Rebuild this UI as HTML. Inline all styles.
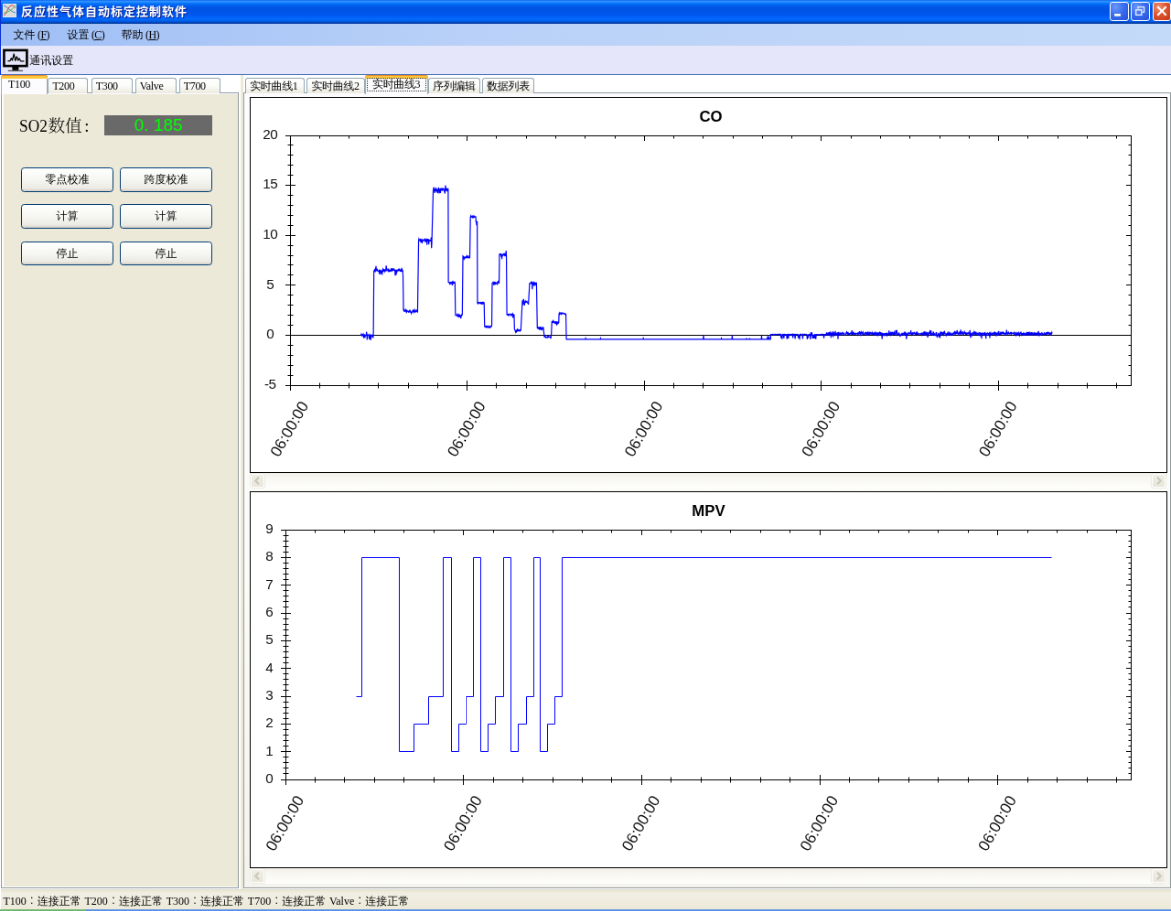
<!DOCTYPE html>
<html lang="zh-CN"><head><meta charset="utf-8"><title>反应性气体自动标定控制软件</title>
<style>
html,body{margin:0;padding:0;width:1171px;height:911px;overflow:hidden;background:#fff}
#root{position:absolute;left:0;top:0;width:1280px;height:996px;transform:scale(0.91484375);transform-origin:0 0;overflow:hidden;background:#fff;will-change:transform;
 font:12px/14px "Liberation Serif","WenQuanYi Zen Hei",serif;color:#000}
#root *{box-sizing:border-box}
.abs{position:absolute}
/* title bar */
#title{left:0;top:0;width:1280px;height:26px;background:linear-gradient(to bottom,#0058ee 0%,#3593ff 4%,#288eff 8%,#127dff 12%,#036ffc 16%,#0262ee 22%,#0057e5 30%,#0054e3 40%,#0055eb 58%,#005bf5 68%,#026afe 78%,#0062ef 86%,#0052d6 92%,#0040ab 96%,#003092 100%)}
#ttext{left:23px;top:5px;height:16px;line-height:16px;color:#fff;font:bold 13px/16px "Liberation Sans","Noto Sans CJK SC",sans-serif;letter-spacing:1px;text-shadow:1px 1px 0 #0a1883;white-space:nowrap}
.cb{top:2.1px;width:20.2px;height:20.8px;border:1px solid #fff;border-radius:3px;background:radial-gradient(circle at 30% 25%,#6c98f8 0%,#3a6cef 45%,#2450d6 100%)}
.cb.x{background:radial-gradient(circle at 30% 25%,#ee9377 0%,#dd5430 45%,#c33612 100%)}
/* menu */
#menu{left:0;top:26px;width:1280px;height:24px;background:linear-gradient(to right,#9ebef5 0%,#b9d1f8 40%,#c4daf9 100%)}
.mi{top:5px;height:14px;white-space:nowrap}
.mi i{font-style:normal;font-size:12px;letter-spacing:-.6px;margin-left:2.5px}
.mi u{text-decoration:underline}
/* toolbar */
#tool{left:0;top:50px;width:1280px;height:32px;background:#e6e6fa;border-bottom:1.1px solid #4a6fb8}
/* tabs */
.body{border:1px solid #919b9c;background:#fcfcfe}
.tab{top:84.6px;height:17.4px;border:1px solid #91a7b4;border-bottom:none;border-radius:3px 3px 0 0;background:linear-gradient(to bottom,#fff 0%,#fbfbf8 50%,#eceadf 100%);text-align:left;padding-left:4px;line-height:17px;white-space:nowrap;letter-spacing:-.35px}
.tab.sel{top:82px;height:21px;background:#fcfcfe;border-color:#a3b0b8;border-top:none;line-height:20px;padding-left:7px}
.tab.sel:before{content:"";position:absolute;left:-1px;right:-1px;top:0;height:3px;background:#ffc73c;border-top:1px solid #e68b2c;border-radius:3px 3px 0 0}
.btn{width:100.4px;height:26.5px;border:1px solid #003c74;border-radius:3.5px;background:linear-gradient(to bottom,#fff 0%,#f6f6f2 50%,#ecebe5 86%,#d6d0c5 100%);text-align:center;line-height:25px}
.panel{border:1.1px solid #000;background:#fff}
.sb{height:17px;background:linear-gradient(to bottom,#f1efe8 0%,#f8f7f2 35%,#fefefb 100%)}
.sbb{top:1px;width:15px;height:15px;border:1px solid #fff;border-radius:2.5px;background:linear-gradient(to bottom,#f0efe7,#e8e6da);box-shadow:0 0 0 1px #ebe9df}
#status{left:0;top:972px;width:1280px;height:22px;background:linear-gradient(to bottom,#ddd9c6 0,#ece9d8 2px,#f1efe4 5px,#ece9d8 100%)}
svg text.ax{font:15.3px "Liberation Sans",sans-serif;fill:#111;letter-spacing:-.6px}
svg text.xl{font:17.0px "Liberation Sans",sans-serif;fill:#111}
svg text.tt{font:bold 16.8px "Liberation Sans",sans-serif;fill:#000}
#status b{font-weight:normal;display:inline-block;width:12px;text-align:center;font-family:"Noto Serif CJK JP","Noto Sans CJK JP",serif}
</style></head><body>
<div id="root">
 <!-- window chrome -->
 <div id="title" class="abs">
  <svg class="abs" style="left:3.2px;top:4.2px" width="15" height="15" viewBox="0 0 15 15"><rect x="0" y="0" width="15" height="15" fill="#dcdcdc" stroke="#f4f4f4" stroke-width="1"/><path d="M1 13C4 12 6 3 9 2S13 4 14 5" stroke="#e0413a" fill="none" stroke-width="1"/><path d="M1 2C5 3 8 9 14 10" stroke="#3d8fd0" fill="none" stroke-width="1"/><path d="M1 10C5 10 9 8 14 2" stroke="#55b255" fill="none" stroke-width="1"/></svg>
  <div id="ttext" class="abs">反应性气体自动标定控制软件</div>
  <div class="cb abs" style="left:1213.4px"><svg width="18" height="18" viewBox="0 0 18 18" class="abs" style="left:0;top:0"><rect x="4.1" y="12" width="6.8" height="2.7" fill="#fff"/></svg></div>
  <div class="cb abs" style="left:1236.4px"><svg width="18" height="18" viewBox="0 0 18 18" class="abs" style="left:0;top:0"><path d="M7 6.6V4.6H13.6V10.4H11.4" fill="none" stroke="#fff" stroke-opacity=".85" stroke-width="1.3"/><rect x="4.7" y="7.8" width="6.2" height="5.6" fill="none" stroke="#fff" stroke-opacity=".9" stroke-width="1.3"/></svg></div>
  <div class="cb x abs" style="left:1259.5px"><svg width="18" height="18" viewBox="0 0 18 18" class="abs" style="left:0;top:0"><path d="M4.3 4.3L13.7 13.7M13.7 4.3L4.3 13.7" stroke="#fff" stroke-width="2.1"/></svg></div>
 </div>
 <div id="menu" class="abs">
  <div class="mi abs" style="left:14.6px">文件<i>(<u>F</u>)</i></div>
  <div class="mi abs" style="left:73.4px">设置<i>(<u>C</u>)</i></div>
  <div class="mi abs" style="left:132.6px">帮助<i>(<u>H</u>)</i></div>
 </div>
 <div id="tool" class="abs">
  <svg class="abs" style="left:3px;top:3px" width="28" height="26" viewBox="0 0 28 26"><rect x="1.4" y="1.9" width="25" height="17.2" fill="none" stroke="#000" stroke-width="2.6"/><rect x="10.4" y="20" width="7" height="3.9" fill="#000"/><rect x="5.8" y="23.7" width="16.2" height="1.3" fill="#555"/><path d="M5.4 13.6H8L9.4 10.6L10.5 13L12.2 5.8L13.8 13.4L15.3 8.8L16.8 13L18 10.8L19.6 13.8H23.4" fill="none" stroke="#000" stroke-width="1.25" stroke-linejoin="round"/></svg>
  <div class="abs" style="left:32.3px;top:8.6px;height:14px;white-space:nowrap">通讯设置</div>
 </div>

 <!-- left tab control -->
 <div class="body abs" style="left:1px;top:101.4px;width:260.2px;height:869.8px"></div>
 <div class="abs" style="left:4.4px;top:102.8px;width:255.3px;height:866.6px;background:#ece9d8"></div>
 <div class="tab abs" style="left:52.4px;width:44px">T200</div>
 <div class="tab abs" style="left:99.8px;width:44.8px">T300</div>
 <div class="tab abs" style="left:147.8px;width:44.8px">Valve</div>
 <div class="tab abs" style="left:195.8px;width:44.8px">T700</div>
 <div class="tab sel abs" style="left:1px;width:51.2px">T100</div>
 <div class="abs" style="left:21.4px;top:127px;font:300 18.67px/22px 'Liberation Serif','Noto Serif CJK SC',serif;white-space:nowrap"><span style="display:inline-block;width:31px;transform:scaleX(.93);transform-origin:0 50%">SO2</span>数值<span style="margin-left:2.6px">:</span></div>
 <div class="abs" style="left:114px;top:125.7px;width:118.3px;height:22.2px;background:#696969;color:#00ff00;font:19px/22.6px 'Liberation Sans',sans-serif;text-align:center;white-space:nowrap">0.<span style="display:inline-block;width:5.3px"></span>185</div>
 <div class="btn abs" style="left:23.2px;top:183.3px">零点校准</div>
 <div class="btn abs" style="left:131.2px;top:183.3px">跨度校准</div>
 <div class="btn abs" style="left:23.2px;top:223.4px">计算</div>
 <div class="btn abs" style="left:131.2px;top:223.4px">计算</div>
 <div class="btn abs" style="left:23.2px;top:263.6px">停止</div>
 <div class="btn abs" style="left:131.2px;top:263.6px">停止</div>

 <!-- splitter -->
 <div class="abs" style="left:263.2px;top:82px;width:2.6px;height:890px;background:#ece9d8"></div>

 <!-- right tab control -->
 <div class="body abs" style="left:265.9px;top:101.4px;width:1013.8px;height:869.8px;background:linear-gradient(to bottom,#fcfcfe 0%,#fbfbf8 60%,#f4f3ee 100%)"></div>
 <div class="tab abs" style="left:268.2px;width:64.6px">实时曲线1</div>
 <div class="tab abs" style="left:335.4px;width:63.6px">实时曲线2</div>
 <div class="tab abs" style="left:468px;width:56.8px">序列编辑</div>
 <div class="tab abs" style="left:527.2px;width:56.8px">数据列表</div>
 <div class="tab sel abs" style="left:399px;width:69px">实时曲线3<span class="abs" style="left:1.4px;top:3.4px;right:1.4px;bottom:2.6px;border:1px dotted #333"></span></div>

 <div class="sb abs" style="left:273px;top:517px;width:1003px"><div class="sbb abs" style="left:1px"><svg width="13" height="13" viewBox="0 0 13 13" class="abs" style="left:0;top:0"><path d="M8 2.8L4.2 6.5L8 10.2" fill="none" stroke="#c9c7ba" stroke-width="2"/></svg></div><div class="sbb abs" style="right:2px"><svg width="13" height="13" viewBox="0 0 13 13" class="abs" style="left:0;top:0"><path d="M5 2.8L8.8 6.5L5 10.2" fill="none" stroke="#c9c7ba" stroke-width="2"/></svg></div></div>
 <div class="sb abs" style="left:273px;top:949px;width:1003px"><div class="sbb abs" style="left:1px"><svg width="13" height="13" viewBox="0 0 13 13" class="abs" style="left:0;top:0"><path d="M8 2.8L4.2 6.5L8 10.2" fill="none" stroke="#c9c7ba" stroke-width="2"/></svg></div><div class="sbb abs" style="right:2px"><svg width="13" height="13" viewBox="0 0 13 13" class="abs" style="left:0;top:0"><path d="M5 2.8L8.8 6.5L5 10.2" fill="none" stroke="#c9c7ba" stroke-width="2"/></svg></div></div>

 <svg class="abs" style="left:0;top:0" width="1280" height="996" viewBox="0 0 1280 996">
<rect x="273.5" y="106.5" width="1002" height="410" fill="#fff" stroke="#000" stroke-width="1"/>
<rect x="273.5" y="537.5" width="1002" height="411" fill="#fff" stroke="#000" stroke-width="1"/>
<path d="M317.5 148V427M1236.5 148V422M349.5 418.5V424.5M349.5 148.5V151.5M381.5 418.5V424.5M381.5 148.5V151.5M413.5 418.5V424.5M413.5 148.5V151.5M446.5 418.5V424.5M446.5 148.5V151.5M478.5 418.5V424.5M478.5 148.5V151.5M510.5 416V427M510.5 148.5V154M542.5 418.5V424.5M542.5 148.5V151.5M575.5 418.5V424.5M575.5 148.5V151.5M607.5 418.5V424.5M607.5 148.5V151.5M639.5 418.5V424.5M639.5 148.5V151.5M672.5 418.5V424.5M672.5 148.5V151.5M704.5 416V427M704.5 148.5V154M736.5 418.5V424.5M736.5 148.5V151.5M768.5 418.5V424.5M768.5 148.5V151.5M801.5 418.5V424.5M801.5 148.5V151.5M833.5 418.5V424.5M833.5 148.5V151.5M865.5 418.5V424.5M865.5 148.5V151.5M897.5 416V427M897.5 148.5V154M930.5 418.5V424.5M930.5 148.5V151.5M962.5 418.5V424.5M962.5 148.5V151.5M994.5 418.5V424.5M994.5 148.5V151.5M1027.5 418.5V424.5M1027.5 148.5V151.5M1059.5 418.5V424.5M1059.5 148.5V151.5M1091.5 416V427M1091.5 148.5V154M1123.5 418.5V424.5M1123.5 148.5V151.5M1156.5 418.5V424.5M1156.5 148.5V151.5M1188.5 418.5V424.5M1188.5 148.5V151.5M1220.5 418.5V424.5M1220.5 148.5V151.5M312 148.5H1237M312 421.5H1237M314.5 410.5H320.5M1233.5 410.5H1236.5M314.5 399.5H320.5M1233.5 399.5H1236.5M314.5 388.5H320.5M1233.5 388.5H1236.5M314.5 377.5H320.5M1233.5 377.5H1236.5M312 366.5H323M1231 366.5H1236.5M314.5 355.5H320.5M1233.5 355.5H1236.5M314.5 344.5H320.5M1233.5 344.5H1236.5M314.5 333.5H320.5M1233.5 333.5H1236.5M314.5 322.5H320.5M1233.5 322.5H1236.5M312 311.5H323M1231 311.5H1236.5M314.5 300.5H320.5M1233.5 300.5H1236.5M314.5 289.5H320.5M1233.5 289.5H1236.5M314.5 279.5H320.5M1233.5 279.5H1236.5M314.5 268.5H320.5M1233.5 268.5H1236.5M312 257.5H323M1231 257.5H1236.5M314.5 246.5H320.5M1233.5 246.5H1236.5M314.5 235.5H320.5M1233.5 235.5H1236.5M314.5 224.5H320.5M1233.5 224.5H1236.5M314.5 213.5H320.5M1233.5 213.5H1236.5M312 202.5H323M1231 202.5H1236.5M314.5 191.5H320.5M1233.5 191.5H1236.5M314.5 180.5H320.5M1233.5 180.5H1236.5M314.5 169.5H320.5M1233.5 169.5H1236.5M314.5 158.5H320.5M1233.5 158.5H1236.5" stroke="#000" stroke-width="1" fill="none"/>
<path d="M317.5 366.5H1236.5" stroke="#000" stroke-width="1" fill="none"/>
<text x="295.2" y="424.9" text-anchor="middle" class="ax">-5</text>
<text x="295.2" y="370.3" text-anchor="middle" class="ax">0</text>
<text x="295.2" y="315.7" text-anchor="middle" class="ax">5</text>
<text x="295.2" y="261.1" text-anchor="middle" class="ax">10</text>
<text x="295.2" y="206.5" text-anchor="middle" class="ax">15</text>
<text x="295.2" y="151.9" text-anchor="middle" class="ax">20</text>
<text transform="translate(315.86 468.72) rotate(-60)" text-anchor="middle" class="xl" y="6.12">06:00:00</text>
<text transform="translate(509.5 468.72) rotate(-60)" text-anchor="middle" class="xl" y="6.12">06:00:00</text>
<text transform="translate(703.14 468.72) rotate(-60)" text-anchor="middle" class="xl" y="6.12">06:00:00</text>
<text transform="translate(896.79 468.72) rotate(-60)" text-anchor="middle" class="xl" y="6.12">06:00:00</text>
<text transform="translate(1090.43 468.72) rotate(-60)" text-anchor="middle" class="xl" y="6.12">06:00:00</text>
<text x="777" y="133.25" text-anchor="middle" class="tt">CO</text>
<path d="M394.38 365.44 394.71 366.7 395.04 365.36 395.37 366.35 395.7 367.72 396.02 365.39 396.35 367.26 396.68 365.7 397.01 365.18 397.34 366.77 397.66 369.72 397.99 366.16 398.32 365.92 398.65 367.33 398.98 369.18 399.3 366.47 399.63 366.7 399.96 366.27 400.29 366.21 400.61 362.71 400.94 364.91 401.27 371.52 401.6 367.12 401.93 366.65 402.25 365.93 402.58 366.19 402.91 366.35 403.24 366.53 403.57 370.79 403.89 367.32 404.22 365.61 404.55 366.09 404.88 371.12 405.21 371.2 405.53 366.9 405.86 366.46 406.19 366.2 406.52 366.29 406.85 367.47 407.17 366.47 407.5 366.88 407.83 369.37 408.16 364.51 408.7 296.32 409.03 296 409.36 295.09 409.69 295.89 410.02 294.86 410.34 296.2 410.67 295.32 411 290.78 411.33 294.92 411.65 295.5 411.98 294.55 412.31 294.33 412.64 295.64 412.97 296.39 413.29 296.4 413.62 296.2 413.95 295.89 414.28 296.52 414.61 299.57 414.93 295.08 415.26 295.33 415.59 297.05 415.92 295.39 416.25 300.17 416.57 295.78 416.9 297.01 417.23 295.76 417.56 298.44 417.89 299.13 418.21 295.44 418.54 293.98 418.87 294.64 419.2 296.82 419.53 294 419.85 296.47 420.18 294.86 420.51 294.86 420.84 296.85 421.16 296.27 421.49 295.43 421.82 294.57 422.15 290.34 422.48 293.08 422.8 295.19 423.13 294.43 423.46 295.56 423.79 295.72 424.12 295.75 424.44 296.17 424.77 293.56 425.1 296.34 425.43 295.91 425.76 296.6 426.08 296.3 426.41 294.88 426.74 296.35 427.07 296.47 427.4 294.97 427.72 293.14 428.05 294.79 428.38 295.82 428.71 294.73 429.04 294.72 429.36 293.36 429.69 295.44 430.02 295.21 430.35 294.82 430.67 294.22 431 295 431.33 295.67 431.66 294.77 431.99 301.17 432.31 295.52 432.64 295.93 432.97 300.66 433.3 296.28 433.63 295.73 433.95 296.71 434.28 295.17 434.61 296.49 434.94 294.28 435.27 296.36 435.59 294.94 435.92 295.66 436.25 295.49 436.58 293.68 436.91 295.54 437.23 296.03 437.56 295.52 437.89 296.04 438.22 295.33 438.54 296.32 438.87 296.03 439.2 292.75 439.53 297.19 439.86 294.85 440.18 295.96 440.51 300.69 441.06 339.6 441.39 337.22 441.71 340.72 442.04 339.83 442.37 339.47 442.7 339.71 443.03 339.04 443.35 340.62 443.68 339.36 444.01 340.63 444.34 339.86 444.67 340.84 444.99 339.45 445.32 339.61 445.65 340.01 445.98 340.22 446.31 340.21 446.63 341.72 446.96 340.61 447.29 340.4 447.62 340.39 447.95 338.6 448.27 340.58 448.6 340.19 448.93 341.01 449.26 341.66 449.58 342.5 449.91 340.51 450.24 342.12 450.57 340.76 450.9 340.21 451.22 339.32 451.55 340.17 451.88 339.35 452.21 339.36 452.54 341.18 452.86 340.32 453.19 338.77 453.52 339.83 453.85 340.36 454.18 341.05 454.5 341.04 454.83 339.65 455.16 338.96 455.49 339.25 455.82 340.28 456.14 340.47 456.47 340.78 457.56 263 457.89 261.29 458.22 262.21 458.55 262.67 458.88 262.2 459.2 262.9 459.53 261.84 459.86 260.87 460.19 265.1 460.52 262.37 460.84 262.58 461.17 263.36 461.5 265.96 461.83 262.05 462.16 262.44 462.48 262.89 462.81 262.74 463.14 262.21 463.47 263.02 463.8 263.1 464.12 262.7 464.45 261.26 464.78 261.11 465.11 263.95 465.43 263.38 465.76 263.57 466.09 262.15 466.42 261.79 466.75 267.65 467.07 261.07 467.4 263.56 467.73 262.71 468.06 261.13 468.39 263.25 468.71 267.15 469.04 262.78 469.37 262.4 469.7 262.38 470.03 263.12 470.35 263.45 470.68 263.03 471.01 263.18 471.34 259.41 471.67 271.3 471.99 266.09 473.52 208.19 473.85 206.61 474.18 204.57 474.51 206.03 474.84 208.33 475.16 210.99 475.49 208.99 475.82 206.92 476.15 206.3 476.47 207.7 476.8 206.82 477.13 208.27 477.46 208.45 477.79 210.32 478.11 206.63 478.44 210.58 478.77 209.82 479.1 211.37 479.43 204.85 479.75 207.59 480.08 208.58 480.41 206.69 480.74 211.09 481.07 206.13 481.39 210.91 481.72 207.6 482.05 206.21 482.38 206.48 482.71 207.18 483.03 205.59 483.36 207.96 483.69 208 484.02 205.5 484.35 207.17 484.67 207.03 485 205.87 485.33 207.4 485.66 209.47 485.98 207.7 486.31 211.81 486.64 206.95 486.97 202.56 487.3 207.6 487.62 207.81 487.95 206.75 488.28 207.9 488.61 208.36 488.94 206.06 489.26 208.06 489.59 205.93 489.92 206.85 490.14 309.1 490.47 308.22 490.79 308.4 491.12 309.29 491.45 309.92 491.78 308.32 492.11 309.74 492.43 309.17 492.76 310.53 493.09 308.61 493.42 308.5 493.75 308.56 494.07 308.15 494.4 312.04 494.73 308 495.06 310.53 495.39 308.11 495.71 308.55 496.04 309.49 496.37 309.3 496.7 308.41 497.02 308.24 497.35 309.44 497.79 344.09 498.12 344.6 498.45 344.67 498.77 344.85 499.1 344.95 499.43 345.09 499.76 343.69 500.09 344.4 500.41 345.6 500.74 343.49 501.07 346.86 501.4 345.27 501.73 344.22 502.05 345.38 502.38 344.66 502.71 345.49 503.04 344.83 503.36 345.23 503.69 348.2 504.02 345.31 504.35 345.55 504.68 344 505 344.14 505.33 344.85 505.99 280.38 506.32 280.88 506.64 280.42 506.97 280.99 507.3 283.16 507.63 282.39 507.96 281.53 508.28 281.93 508.61 281.46 508.94 280.79 509.27 280.91 509.6 281.29 509.92 279.93 510.25 280.84 510.58 279.51 510.91 281.54 511.23 281.48 511.56 280.41 511.89 279.35 512.22 281.65 512.55 281.81 512.87 281.43 513.2 281.49 513.53 281.59 514.19 238.29 514.51 236.24 514.84 237.03 515.17 236.58 515.5 236.98 515.83 236.54 516.15 237.22 516.48 236.46 516.81 237.26 517.14 236.51 517.47 238.31 517.79 236.3 518.12 237.9 518.45 236.47 518.78 236.92 519.11 237.19 519.43 237.06 519.76 236.83 520.09 237.02 520.31 243.07 520.64 241.18 520.96 246.27 521.29 245.04 521.62 241.95 521.95 330.78 522.27 330.49 522.6 332.55 522.93 330.99 523.26 330.54 523.59 330.58 523.91 330.73 524.24 331.34 524.57 330.86 524.9 331.24 525.23 331.53 525.55 330.64 525.88 330.99 526.21 332.29 526.54 330.03 526.87 332.89 527.19 331.45 527.52 330.83 527.85 331.43 528.18 329.77 528.51 331.37 528.83 331.54 529.16 330.25 529.71 356.26 530.04 357.12 530.36 356.52 530.69 356.97 531.02 357.43 531.35 356.58 531.68 356.84 532 357.84 532.33 357.63 532.66 356.86 532.99 357.46 533.32 356.61 533.64 356.8 533.97 356.59 534.3 358.5 534.63 357.49 534.95 357.57 535.28 358.13 535.61 357.73 535.94 355.98 536.27 357.32 536.59 356.77 536.92 356.93 537.25 356.96 537.58 355.59 538.02 309.4 538.34 309.31 538.67 309.38 539 308.6 539.33 309.67 539.65 308.55 539.98 311.94 540.31 308.12 540.64 310.32 540.97 307.95 541.29 309.38 541.62 311.11 541.95 308.76 542.28 309.74 542.61 309.58 542.93 309.23 543.26 309.53 543.59 311.38 543.92 308.49 544.25 308.5 544.57 306.83 544.9 309.57 545.23 308.64 545.56 309.79 545.99 277.14 546.32 278.11 546.65 278.16 546.98 278.59 547.31 278.15 547.63 277.01 547.96 281.04 548.29 278.1 548.62 283.16 548.95 278.11 549.27 280.14 549.6 277.57 549.93 278.94 550.26 277.63 550.59 279.01 550.91 276.8 551.24 278.43 551.57 277.82 551.9 279.02 552.23 278.3 552.55 280.19 552.88 279.08 553.21 273.94 553.54 279.3 554.08 343.72 554.41 344.21 554.74 344.21 555.07 343.58 555.4 344.42 555.72 344.09 556.05 344.82 556.38 343.98 556.71 343.41 557.04 343.78 557.36 343.55 557.69 343.43 558.02 343.78 558.35 344.57 558.67 344.99 559 343.58 559.33 344.1 559.66 343.63 559.99 343.74 560.31 343.12 560.64 347.48 560.97 343.12 561.3 344.08 561.63 344.31 561.95 343.63 562.39 359.74 562.72 360.67 563.05 360.95 563.37 362.38 563.7 363.07 564.03 361.36 564.36 361.21 564.69 362.11 565.01 360.82 565.34 360.15 565.67 361.4 566 360.76 566.33 362.12 566.65 360.1 566.98 361.33 567.31 361.76 567.64 361.25 567.97 361 568.29 361.07 568.62 361.64 568.95 360.23 569.28 361.53 571.03 328.38 571.35 330.65 571.68 333.32 572.01 329.17 572.34 326.8 572.67 329.51 572.99 329.95 573.32 334.05 573.65 330.82 573.98 330.57 574.31 329.12 574.63 329.63 574.96 330.28 575.29 329.8 575.62 329.51 575.95 329.24 576.27 330.56 576.6 331.17 576.93 331.2 577.26 330.3 577.58 332.92 578.9 310.02 579.22 310.18 579.55 309.6 579.88 309.47 580.21 309.26 580.54 308.56 580.86 309.41 581.19 310.54 581.52 307.76 581.85 316.32 582.18 311.11 582.5 309.28 582.83 311.18 583.16 307.71 583.49 310.03 583.82 312.76 584.14 309.9 584.47 310.59 584.8 309.61 585.13 310.53 585.46 310.97 585.78 309.27 586.11 309.03 586.44 309.62 587.31 358.51 587.64 358.67 587.97 357.25 588.3 359.55 588.63 358.26 588.95 358.85 589.28 358.65 589.61 360.76 589.94 357.18 590.26 358.97 590.59 359.31 590.92 357.79 591.25 358.07 591.58 360.97 591.9 357.73 592.23 358.95 592.56 358.46 592.89 359.69 593.22 358.7 593.54 359.09 593.87 357.44 595.07 368.62 595.4 366.4 595.73 368.36 596.06 368.76 596.39 368.19 596.71 368.8 597.04 368.44 597.37 368.6 597.7 368.58 598.03 369.08 598.35 368.8 598.68 367.95 599.01 368.52 599.34 367.82 599.67 368.39 599.99 368.16 600.32 368.31 600.65 368.43 600.98 368.54 601.3 368.13 601.63 368.08 601.96 370.18 602.29 368.29 602.62 366.77 603.27 351.03 603.6 352.07 603.93 352.38 604.26 351.57 604.58 352.84 604.91 350.97 605.24 351.77 605.57 352.05 605.9 352.08 606.22 353.4 606.55 351.22 606.88 353.04 607.21 352.73 607.54 351.26 607.86 354.28 608.19 352.79 608.52 355.79 608.85 351.17 609.18 354.7 609.5 352.75 609.83 352.72 610.16 352.27 610.49 352.91 610.81 352.03 611.03 343.67 611.36 342.25 611.69 343.11 612.02 342.41 612.35 342.29 612.67 342.68 613 341.44 613.33 343.22 613.66 342.42 613.98 342.71 614.31 342.62 614.64 342.19 614.97 342.86 615.3 342.62 615.62 342.32 615.95 342.62 616.28 342.41 616.61 342.47 616.94 342.66 617.26 343.56 617.59 343.56 617.92 343.07 618.25 343.67 618.58 343.53 619.12 370.88 639.78 370.88 640.11 369.79 640.44 370.88 656.07 370.88 656.4 369.79 656.72 370.88 702.85 370.88 703.18 369.79 703.51 370.88 768.66 370.88 768.98 366.51 769.31 370.88 788.22 370.88 788.55 369.79 788.88 370.88 800.03 370.88 800.36 366.51 800.68 370.88 815.66 370.88 815.99 369.57 816.31 370.88 819.05 370.88 819.37 369.57 819.7 370.88 832.16 370.88 832.49 367.17 832.82 370.88 838.61 370.88 838.94 367.6 839.27 370.88 840.25 370.88 840.58 367.6 840.91 370.88 842.33 370.88 842.55 365.54 843.04 365.75 843.53 365.5 844.02 365.46 844.52 365.38 845.01 366.04 845.5 366.27 845.99 365.4 846.48 365.82 846.98 365.96 847.47 365.33 847.96 365.82 848.45 365.69 848.94 365.64 849.43 365.96 849.93 365.26 850.42 365.42 850.91 365.76 851.4 365.39 851.89 365.98 852.39 365.28 852.88 365.72 853.37 365.45 853.86 369.6 854.35 365.71 854.85 370.57 855.34 365.53 855.83 365.8 856.32 365.59 856.81 369.86 857.3 365.57 857.8 365.43 858.29 365.52 858.78 365.58 859.27 365.74 859.76 365.69 860.26 370.74 860.75 365.86 861.24 365.48 861.73 370.06 862.22 365.63 862.72 365.79 863.21 365.67 863.7 365.6 864.19 366.13 864.68 365.23 865.18 365.51 865.67 365.84 866.16 365.47 866.65 369.49 867.14 365.38 867.63 365.54 868.13 365.3 868.62 365.4 869.11 370.39 869.6 365.43 870.09 365.48 870.59 365.7 871.08 365.62 871.57 365.5 872.06 365.7 872.55 369.41 873.05 365.62 873.54 369.55 874.03 370.27 874.52 365.4 875.01 365.48 875.5 365.16 876 365.58 876.49 365.8 876.98 365.68 877.47 370.52 877.96 365.29 878.46 365.65 878.95 365.54 879.44 365.23 879.93 365.72 880.42 365.69 880.92 365.53 881.41 365.33 881.9 365.69 882.39 370.85 882.88 365.79 883.37 369.34 883.87 365.64 884.36 365.37 884.85 365.53 885.34 365.68 885.83 370.94 886.33 363.37 886.82 365.07 887.31 363.26 887.8 365.45 888.29 369.84 888.79 365.73 889.28 369.99 889.77 365.71 890.26 370.01 890.75 365.54 891.25 365.65 891.74 370.76 892.23 365.67 892.72 365.57 893.21 365.68 893.7 365.78 894.2 365.62 894.69 365.78 895.18 365.94 895.67 365.65 896.16 365.88 896.66 365.76 897.15 366.2 897.64 365.41 898.13 365.26 898.62 365.89 899.12 365.91 899.61 365.46 900.1 365.6 900.59 369.73 901.08 365.57 901.57 365.8 902.07 365.67 902.56 365.59 903.05 365.86 903.54 363.47 903.87 364.66 904.2 365.76 904.53 365.12 904.85 365.16 905.18 363.71 905.51 365.36 905.84 366.59 906.17 362.97 906.49 364.94 906.82 365.93 907.15 365.04 907.48 366.22 907.81 363.45 908.13 363.99 908.46 369.31 908.79 364.88 909.12 365.45 909.44 363.99 909.77 366.06 910.1 363.55 910.43 364.08 910.76 368.45 911.08 363.41 911.41 363.9 911.74 365.84 912.07 363.66 912.4 365.35 912.72 365.84 913.05 361.83 913.38 365.04 913.71 364.92 914.04 366.05 914.36 366.28 914.69 364.76 915.02 363.39 915.35 364.61 915.68 364.3 916 370.78 916.33 364.15 916.66 363.04 916.99 365.92 917.32 364.54 917.64 365.32 917.97 365.59 918.3 365.13 918.63 364.43 918.95 366.54 919.28 364.47 919.61 364.4 919.94 364.61 920.27 363.87 920.59 364.71 920.92 363.78 921.25 364.13 921.58 365 921.91 365.19 922.23 365.21 922.56 363.62 922.89 365.43 923.22 366.04 923.55 366.18 923.87 366.07 924.2 366.07 924.53 365.84 924.86 363.98 925.19 364.04 925.51 363.07 925.84 364.29 926.17 364.54 926.5 365.45 926.82 362.83 927.15 365.83 927.48 364.24 927.81 364.55 928.14 365.95 928.46 365.6 928.79 364.84 929.12 365.19 929.45 364.21 929.78 364.01 930.1 364.15 930.43 364.64 930.76 365.41 931.09 360.99 931.42 365.96 931.74 364.38 932.07 363.79 932.4 365.76 932.73 364.27 933.06 365.37 933.38 365.14 933.71 364.16 934.04 364.97 934.37 365.24 934.7 365.21 935.02 364.2 935.35 366.17 935.68 364.24 936.01 364.34 936.33 364.56 936.66 364.76 936.99 365.03 937.32 364.57 937.65 365.59 937.97 364.42 938.3 365.03 938.63 364.47 938.96 363.35 939.29 362.91 939.61 364.2 939.94 363.14 940.27 363.13 940.6 366.13 940.93 365.55 941.25 363.94 941.58 363.09 941.91 364.49 942.24 362.81 942.57 365.57 942.89 363.33 943.22 364.21 943.55 363.35 943.88 365.52 944.2 365.29 944.53 365.23 944.86 365.45 945.19 365.39 945.52 364.47 945.84 363.05 946.17 365.48 946.5 362.82 946.83 364.14 947.16 366.69 947.48 364.94 947.81 365.28 948.14 363.27 948.47 363.03 948.8 365.18 949.12 364.4 949.45 365.04 949.78 364.13 950.11 365.62 950.44 365.02 950.76 364.01 951.09 365.08 951.42 364.55 951.75 363.75 952.08 364.56 952.4 363.62 952.73 363.69 953.06 365.73 953.39 364.72 953.71 363.63 954.04 364.84 954.37 364.51 954.7 365.5 955.03 365.85 955.35 363.46 955.68 364.99 956.01 365.35 956.34 364.54 956.67 365.21 956.99 363.24 957.32 363.53 957.65 364.36 957.98 365.26 958.31 364.46 958.63 366.06 958.96 366.58 959.29 365.1 959.62 363.28 959.95 365.99 960.27 366.34 960.6 365.75 960.93 364.36 961.26 363.44 961.58 363.14 961.91 365.56 962.24 363.19 962.57 364.95 962.9 364.24 963.22 364.13 963.55 365.93 963.88 365.36 964.21 370.72 964.54 363.88 964.86 365.1 965.19 365.7 965.52 366.22 965.85 364.28 966.18 366.16 966.5 366.51 966.83 365.9 967.16 364.13 967.49 366.13 967.82 365.59 968.14 365.11 968.47 364.43 968.8 364.67 969.13 364.52 969.46 366.65 969.78 365.94 970.11 364.68 970.44 365.35 970.77 365.38 971.09 365.67 971.42 365.75 971.75 361.41 972.08 364.51 972.41 365.34 972.73 365.19 973.06 364.5 973.39 365.83 973.72 364.68 974.05 363.17 974.37 363.53 974.7 365.63 975.03 365.26 975.36 364.16 975.69 365.22 976.01 363.03 976.34 366.16 976.67 363.63 977 365.98 977.33 363.37 977.65 362.81 977.98 365.03 978.31 365.87 978.64 365.38 978.96 366.2 979.29 360.89 979.62 364.15 979.95 363.06 980.28 360.77 980.6 366.08 980.93 365.63 981.26 366.03 981.59 365.13 981.92 365.13 982.24 364.93 982.57 363.41 982.9 365.51 983.23 365.37 983.56 366.94 983.88 367.32 984.21 365.93 984.54 367.29 984.87 365.29 985.2 365.32 985.52 365.01 985.85 364.53 986.18 365.28 986.51 364.63 986.84 365.04 987.16 364.93 987.49 366.77 987.82 363.64 988.15 366 988.47 366.81 988.8 362.6 989.13 365.42 989.46 365.4 989.79 362.87 990.11 364.5 990.44 364.73 990.77 370.69 991.1 367.16 991.43 364.39 991.75 366.21 992.08 364.44 992.41 365.86 992.74 363.89 993.07 364.47 993.39 364.78 993.72 364.28 994.05 363.76 994.38 364.7 994.71 365.07 995.03 364.99 995.36 364.71 995.69 360.95 996.02 364.52 996.35 365.69 996.67 364.6 997 364.46 997.33 364.03 997.66 365.61 997.98 365.83 998.31 364.08 998.64 364.35 998.97 364.13 999.3 363.46 999.62 363.45 999.95 365.03 1000.28 365.59 1000.61 364.4 1000.94 364.48 1001.26 363.86 1001.59 365.95 1001.92 364.79 1002.25 365.23 1002.58 363.33 1002.9 363.77 1003.23 365.47 1003.56 365.62 1003.89 365.08 1004.22 364.91 1004.54 364.95 1004.87 364.7 1005.2 365.09 1005.53 365.42 1005.85 364.94 1006.18 364.54 1006.51 365.05 1006.84 365.29 1007.17 365.5 1007.49 366.1 1007.82 364.09 1008.15 364.3 1008.48 366.23 1008.81 364.65 1009.13 363.94 1009.46 365.63 1009.79 365.56 1010.12 365.7 1010.45 362.34 1010.77 363.8 1011.1 363.54 1011.43 366.65 1011.76 362.64 1012.09 364.52 1012.41 365.76 1012.74 364.89 1013.07 363.96 1013.4 364.75 1013.73 363.22 1014.05 369.03 1014.38 365.83 1014.71 365.42 1015.04 364.42 1015.36 365.67 1015.69 363.95 1016.02 364.38 1016.35 364.41 1016.68 360.81 1017 365.09 1017.33 365.5 1017.66 361.33 1017.99 363.99 1018.32 364.33 1018.64 365.32 1018.97 365.22 1019.3 366.09 1019.63 365.69 1019.96 363.92 1020.28 364.62 1020.61 363.8 1020.94 365.18 1021.27 364.18 1021.6 366.74 1021.92 365.26 1022.25 367.04 1022.58 365.73 1022.91 365.29 1023.23 363.46 1023.56 363.39 1023.89 366.07 1024.22 368.59 1024.55 366.03 1024.87 367.55 1025.2 366.55 1025.53 364.41 1025.86 364.55 1026.19 366.6 1026.51 367.39 1026.84 365.82 1027.17 364.72 1027.5 369.54 1027.83 363.19 1028.15 363.38 1028.48 364.93 1028.81 364 1029.14 365.46 1029.47 363.96 1029.79 364.8 1030.12 366.11 1030.45 364.69 1030.78 363.08 1031.11 364.81 1031.43 366.47 1031.76 366.09 1032.09 361.92 1032.42 364.51 1032.74 363.42 1033.07 364.86 1033.4 365.02 1033.73 365.17 1034.06 366.24 1034.38 364.82 1034.71 364.98 1035.04 366.2 1035.37 365.66 1035.7 363.92 1036.02 363.45 1036.35 366.72 1036.68 363.84 1037.01 364.95 1037.34 366.16 1037.66 364.07 1037.99 364.96 1038.32 365.95 1038.65 365.47 1038.98 363.22 1039.3 366.02 1039.63 365.62 1039.96 365.31 1040.29 366.42 1040.61 364.29 1040.94 365.45 1041.27 364.99 1041.6 366.38 1041.93 364.53 1042.25 363.97 1042.58 364.87 1042.91 364.89 1043.24 364.96 1043.57 361.77 1043.89 363.61 1044.22 365.65 1044.55 364.49 1044.88 363.56 1045.21 364.8 1045.53 364.55 1045.86 364.34 1046.19 360.85 1046.52 364.37 1046.85 364.89 1047.17 364.81 1047.5 364.29 1047.83 365.31 1048.16 363.66 1048.49 364.17 1048.81 363.25 1049.14 365.79 1049.47 362.07 1049.8 364.31 1050.12 360.39 1050.45 364.87 1050.78 364.33 1051.11 364.02 1051.44 364.17 1051.76 365.46 1052.09 362.09 1052.42 363.43 1052.75 364.52 1053.08 365.97 1053.4 364.03 1053.73 364.22 1054.06 365.27 1054.39 362.66 1054.72 363.29 1055.04 363.79 1055.37 363.73 1055.7 366.21 1056.03 364.4 1056.36 364.81 1056.68 365.77 1057.01 363.37 1057.34 364.98 1057.67 364.68 1057.99 364.85 1058.32 363.56 1058.65 365.05 1058.98 363.72 1059.31 364.47 1059.63 364.66 1059.96 366.47 1060.29 360.77 1060.62 367.12 1060.95 369.28 1061.27 364.21 1061.6 365.08 1061.93 366.05 1062.26 365.65 1062.59 366.3 1062.91 363.32 1063.24 364.61 1063.57 364 1063.9 364.65 1064.23 365.88 1064.55 365.42 1064.88 362.87 1065.21 363.6 1065.54 365.71 1065.87 363.78 1066.19 364.63 1066.52 363.79 1066.85 364.99 1067.18 364.02 1067.5 364.76 1067.83 365.24 1068.16 364.27 1068.49 364.2 1068.82 365.7 1069.14 364.52 1069.47 365.71 1069.8 366.34 1070.13 366.12 1070.46 364.77 1070.78 363.63 1071.11 363.67 1071.44 364.05 1071.77 366.32 1072.1 365.48 1072.42 366.15 1072.75 364.17 1073.08 370.18 1073.41 364.08 1073.74 364.15 1074.06 364.29 1074.39 365.74 1074.72 363.96 1075.05 365.46 1075.37 366.48 1075.7 363.83 1076.03 366.15 1076.36 363.63 1076.69 363.49 1077.01 366.63 1077.34 364.58 1077.67 370.09 1078 365.23 1078.33 364.05 1078.65 366.77 1078.98 364.12 1079.31 363.9 1079.64 364.07 1079.97 364.32 1080.29 364.74 1080.62 366.36 1080.95 364.5 1081.28 364.31 1081.61 363.89 1081.93 369.4 1082.26 364.31 1082.59 364.48 1082.92 363.86 1083.25 365.86 1083.57 366.16 1083.9 364.24 1084.23 366.28 1084.56 364.87 1084.88 363.63 1085.21 365.14 1085.54 365.29 1085.87 364.63 1086.2 363.83 1086.52 365.16 1086.85 365.45 1087.18 364.08 1087.51 363.1 1087.84 363.3 1088.16 365.77 1088.49 366.06 1088.82 366.63 1089.15 364.63 1089.48 365.25 1089.8 365.79 1090.13 364.37 1090.46 364.71 1090.79 363.91 1091.12 365.31 1091.44 365.65 1091.77 361.87 1092.1 365.76 1092.43 364.33 1092.75 364.55 1093.08 365.59 1093.41 365.42 1093.74 362.72 1094.07 364.3 1094.39 364.1 1094.72 365.24 1095.05 364.75 1095.38 363.32 1095.71 363.26 1096.03 364.27 1096.36 364.58 1096.69 363.45 1097.02 363.92 1097.35 365.4 1097.67 364.23 1098 364.6 1098.33 366.1 1098.66 366.28 1098.99 365.72 1099.31 364.14 1099.64 364.42 1099.97 364.59 1100.3 360.65 1100.63 363.35 1100.95 364.71 1101.28 363.72 1101.61 365.73 1101.94 364.2 1102.26 363.41 1102.59 364.52 1102.92 364.75 1103.25 364.97 1103.58 364.15 1103.9 364.38 1104.23 364.04 1104.56 364.46 1104.89 362.98 1105.22 366.07 1105.54 363.99 1105.87 363.48 1106.2 363.84 1106.53 364.11 1106.86 364.57 1107.18 364.16 1107.51 363.97 1107.84 364.41 1108.17 364.05 1108.5 366.04 1108.82 362.65 1109.15 364.29 1109.48 364.83 1109.81 365.28 1110.13 365.57 1110.46 366.25 1110.79 362.97 1111.12 364.01 1111.45 365.55 1111.77 365.98 1112.1 365.19 1112.43 364.52 1112.76 365.82 1113.09 365.47 1113.41 363.81 1113.74 364.63 1114.07 366.05 1114.4 366.91 1114.73 366.26 1115.05 363.92 1115.38 364.08 1115.71 363.82 1116.04 362.56 1116.37 365.22 1116.69 365.01 1117.02 367.26 1117.35 364.16 1117.68 365.37 1118.01 365.2 1118.33 364.38 1118.66 365.71 1118.99 365.39 1119.32 364.77 1119.64 366.37 1119.97 366.15 1120.3 365.29 1120.63 365.53 1120.96 364.7 1121.28 365.08 1121.61 365.93 1121.94 365.36 1122.27 362.86 1122.6 366.12 1122.92 365.31 1123.25 364.42 1123.58 363.2 1123.91 365.65 1124.24 365.39 1124.56 365.72 1124.89 362.68 1125.22 365.96 1125.55 364.91 1125.88 366.76 1126.2 364.63 1126.53 365.38 1126.86 364.09 1127.19 364.31 1127.51 366.42 1127.84 362.97 1128.17 364.01 1128.5 364.72 1128.83 365.44 1129.15 363.78 1129.48 364.98 1129.81 366.16 1130.14 363.51 1130.47 364.72 1130.79 365.25 1131.12 363.01 1131.45 367.03 1131.78 364.47 1132.11 364.76 1132.43 365.92 1132.76 364.54 1133.09 364.21 1133.42 365.74 1133.75 365.05 1134.07 365.82 1134.4 366.79 1134.73 363.86 1135.06 361.99 1135.39 363 1135.71 364.38 1136.04 366.23 1136.37 365.42 1136.7 366.48 1137.02 363.99 1137.35 365.1 1137.68 366.07 1138.01 365.84 1138.34 364.84 1138.66 364.03 1138.99 364.5 1139.32 364.24 1139.65 365.9 1139.98 365.73 1140.3 365.84 1140.63 365.44 1140.96 365.43 1141.29 364.08 1141.62 363.74 1141.94 364.49 1142.27 365.63 1142.6 365.77 1142.93 365.3 1143.26 364.56 1143.58 365.25 1143.91 365.35 1144.24 363.15 1144.57 365.53 1144.89 363.17 1145.22 364.7 1145.55 362.7 1145.88 365.19 1146.21 365.14 1146.53 363.78 1146.86 363.73 1147.19 363.71 1147.52 365.35 1147.85 364.99 1148.17 365.69 1148.5 364.8 1148.83 364.1 1149.16 364.49 1149.49 364.89 1149.81 363.43 1150.14 364.35" stroke="#0000ff" stroke-width="1.2" fill="none" stroke-linejoin="miter"/>
<path d="M312.5 579V858M1236.5 579V853M344.5 849.5V855.5M344.5 579.5V582.5M376.5 849.5V855.5M376.5 579.5V582.5M409.5 849.5V855.5M409.5 579.5V582.5M441.5 849.5V855.5M441.5 579.5V582.5M474.5 849.5V855.5M474.5 579.5V582.5M506.5 847V858M506.5 579.5V585M539.5 849.5V855.5M539.5 579.5V582.5M571.5 849.5V855.5M571.5 579.5V582.5M604.5 849.5V855.5M604.5 579.5V582.5M636.5 849.5V855.5M636.5 579.5V582.5M668.5 849.5V855.5M668.5 579.5V582.5M701.5 847V858M701.5 579.5V585M733.5 849.5V855.5M733.5 579.5V582.5M766.5 849.5V855.5M766.5 579.5V582.5M798.5 849.5V855.5M798.5 579.5V582.5M831.5 849.5V855.5M831.5 579.5V582.5M863.5 849.5V855.5M863.5 579.5V582.5M896.5 847V858M896.5 579.5V585M928.5 849.5V855.5M928.5 579.5V582.5M960.5 849.5V855.5M960.5 579.5V582.5M993.5 849.5V855.5M993.5 579.5V582.5M1025.5 849.5V855.5M1025.5 579.5V582.5M1058.5 849.5V855.5M1058.5 579.5V582.5M1090.5 847V858M1090.5 579.5V585M1123.5 849.5V855.5M1123.5 579.5V582.5M1155.5 849.5V855.5M1155.5 579.5V582.5M1188.5 849.5V855.5M1188.5 579.5V582.5M1220.5 849.5V855.5M1220.5 579.5V582.5M307 579.5H1237M307 852.5H1237M309.5 845.5H315.5M1233.5 845.5H1236.5M309.5 839.5H315.5M1233.5 839.5H1236.5M309.5 833.5H315.5M1233.5 833.5H1236.5M309.5 827.5H315.5M1233.5 827.5H1236.5M307 821.5H318M1231 821.5H1236.5M309.5 815.5H315.5M1233.5 815.5H1236.5M309.5 809.5H315.5M1233.5 809.5H1236.5M309.5 803.5H315.5M1233.5 803.5H1236.5M309.5 797.5H315.5M1233.5 797.5H1236.5M307 791.5H318M1231 791.5H1236.5M309.5 785.5H315.5M1233.5 785.5H1236.5M309.5 779.5H315.5M1233.5 779.5H1236.5M309.5 773.5H315.5M1233.5 773.5H1236.5M309.5 767.5H315.5M1233.5 767.5H1236.5M307 761.5H318M1231 761.5H1236.5M309.5 754.5H315.5M1233.5 754.5H1236.5M309.5 748.5H315.5M1233.5 748.5H1236.5M309.5 742.5H315.5M1233.5 742.5H1236.5M309.5 736.5H315.5M1233.5 736.5H1236.5M307 730.5H318M1231 730.5H1236.5M309.5 724.5H315.5M1233.5 724.5H1236.5M309.5 718.5H315.5M1233.5 718.5H1236.5M309.5 712.5H315.5M1233.5 712.5H1236.5M309.5 706.5H315.5M1233.5 706.5H1236.5M307 700.5H318M1231 700.5H1236.5M309.5 694.5H315.5M1233.5 694.5H1236.5M309.5 688.5H315.5M1233.5 688.5H1236.5M309.5 682.5H315.5M1233.5 682.5H1236.5M309.5 676.5H315.5M1233.5 676.5H1236.5M307 670.5H318M1231 670.5H1236.5M309.5 663.5H315.5M1233.5 663.5H1236.5M309.5 657.5H315.5M1233.5 657.5H1236.5M309.5 651.5H315.5M1233.5 651.5H1236.5M309.5 645.5H315.5M1233.5 645.5H1236.5M307 639.5H318M1231 639.5H1236.5M309.5 633.5H315.5M1233.5 633.5H1236.5M309.5 627.5H315.5M1233.5 627.5H1236.5M309.5 621.5H315.5M1233.5 621.5H1236.5M309.5 615.5H315.5M1233.5 615.5H1236.5M307 609.5H318M1231 609.5H1236.5M309.5 603.5H315.5M1233.5 603.5H1236.5M309.5 597.5H315.5M1233.5 597.5H1236.5M309.5 591.5H315.5M1233.5 591.5H1236.5M309.5 585.5H315.5M1233.5 585.5H1236.5" stroke="#000" stroke-width="1" fill="none"/>
<text x="294.25" y="855.9" text-anchor="middle" class="ax">0</text>
<text x="294.25" y="825.57" text-anchor="middle" class="ax">1</text>
<text x="294.25" y="795.23" text-anchor="middle" class="ax">2</text>
<text x="294.25" y="764.9" text-anchor="middle" class="ax">3</text>
<text x="294.25" y="734.57" text-anchor="middle" class="ax">4</text>
<text x="294.25" y="704.23" text-anchor="middle" class="ax">5</text>
<text x="294.25" y="673.9" text-anchor="middle" class="ax">6</text>
<text x="294.25" y="643.57" text-anchor="middle" class="ax">7</text>
<text x="294.25" y="613.23" text-anchor="middle" class="ax">8</text>
<text x="294.25" y="582.9" text-anchor="middle" class="ax">9</text>
<text transform="translate(310.86 899.72) rotate(-60)" text-anchor="middle" class="xl" y="6.12">06:00:00</text>
<text transform="translate(505.56 899.72) rotate(-60)" text-anchor="middle" class="xl" y="6.12">06:00:00</text>
<text transform="translate(700.25 899.72) rotate(-60)" text-anchor="middle" class="xl" y="6.12">06:00:00</text>
<text transform="translate(894.94 899.72) rotate(-60)" text-anchor="middle" class="xl" y="6.12">06:00:00</text>
<text transform="translate(1089.64 899.72) rotate(-60)" text-anchor="middle" class="xl" y="6.12">06:00:00</text>
<text x="774.5" y="563.81" text-anchor="middle" class="tt">MPV</text>
<path d="M389.5 761.5H395.5V609.5H436.5V821.5H452.5V791.5H468.5V761.5H484.5V609.5H493.5V821.5H501.5V791.5H509.5V761.5H517.5V609.5H525.5V821.5H533.5V791.5H541.5V761.5H550.5V609.5H558.5V821.5H566.5V791.5H575.5V761.5H583.5V609.5H590.5V821.5H598.5V791.5H606.5V761.5H614.5V609.5H1149.5" stroke="#0000ff" stroke-width="1" fill="none"/>
 </svg>

 <!-- status -->
 <div id="status" class="abs"><div class="abs" style="left:3.4px;top:5.4px;height:14px;white-space:pre;word-spacing:.8px">T100<b>：</b>连接正常 T200<b>：</b>连接正常 T300<b>：</b>连接正常 T700<b>：</b>连接正常 Valve<b>：</b>连接正常</div></div>
 <!-- taskbar sliver -->
 <div class="abs" style="left:0;top:994px;width:1280px;height:2px;background:#5b8fe6"></div>
 <div class="abs" style="left:0;top:994px;width:93px;height:2px;background:#6db56d"></div>
 <!-- left edge artefact -->
 <div class="abs" style="left:0;top:0;width:1.1px;height:82px;background:#0831d9"></div>
 <div class="abs" style="left:0;top:82px;width:1.1px;height:912px;background:#fff"></div>
</div>
</body></html>
